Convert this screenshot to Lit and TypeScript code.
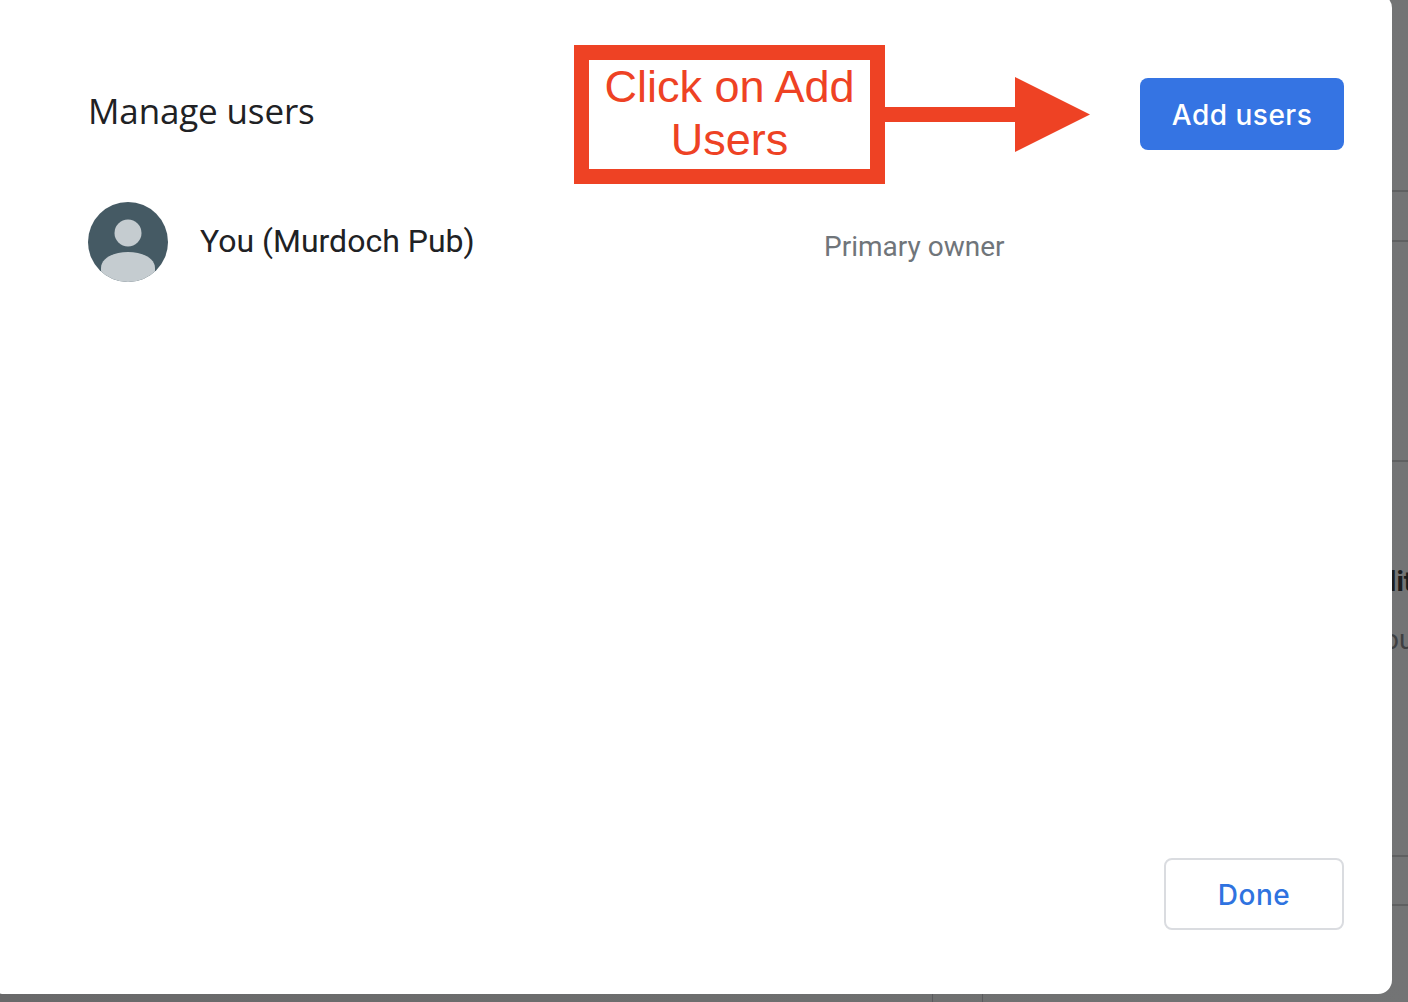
import { LitElement, html, css } from "lit";
import { customElement } from "lit/decorators.js";

@customElement("app-root")
export class AppRoot extends LitElement {
  static styles = css`
    :host {
      display: block;
      width: 1408px;
      height: 1002px;
      position: relative;
      overflow: hidden;
      background: linear-gradient(90deg, #69696a 0%, #6d6e6e 50%, #737475 100%);
      font-family: Roboto, "Liberation Sans", sans-serif;
    }
    .backdrop { position: absolute; inset: 0; }
    .hline { position: absolute; left: 1392px; right: 0; height: 2px; background: #5f6061; }
    .vline { position: absolute; top: 994px; bottom: 0; width: 1px; background: #5a5b5e; }
    .bgtext { position: absolute; line-height: 1; white-space: nowrap; }
    .bgtitle { top: 568px; left: 1389px; font-size: 28px; font-weight: 700; color: #1c1c1d; }
    .bgsub { top: 626px; left: 1383px; font-size: 28px; color: #3f4042; }
    .modal {
      position: relative;
      box-sizing: border-box;
      width: 1402px;
      height: 1000px;
      margin: -6px 0 0 -10px;
      background: #fff;
      border-radius: 14px;
      padding: 84px 48px 64px 98px;
      display: flex;
      flex-direction: column;
    }
    .head { display: flex; justify-content: space-between; align-items: flex-start; height: 72px; }
    h1 {
      margin: 0;
      font-family: "Open Sans", sans-serif;
      font-size: 35px;
      font-weight: 400;
      line-height: 65px;
      color: #202124;
      letter-spacing: -0.15px;
    }
    .btn {
      box-sizing: border-box;
      border-radius: 8px;
      height: 72px;
      padding-top: 2px;
      font-family: Inter, sans-serif;
      font-size: 28px;
      font-weight: 500;
      letter-spacing: 0.5px;
      display: flex;
      align-items: center;
      justify-content: center;
    }
    .primary { width: 204px; background: #3574e3; color: #fff; }
    .outline { width: 180px; background: #fff; color: #2f73e0; border: 2px solid #dadce0; }
    .user { display: flex; margin-top: 52px; height: 80px; }
    .avatar { width: 80px; height: 80px; flex: none; }
    .name { margin-left: 32px; font-size: 32px; line-height: 78px; color: #202124; width: 624px; }
    .role { font-size: 28px; line-height: 90px; color: #70757a; }
    .foot { margin-top: auto; display: flex; justify-content: flex-end; }
    .note { position: absolute; left: 574px; top: 45px; }
    .note-box {
      box-sizing: border-box;
      width: 311px;
      height: 139px;
      border: 15px solid #ee4224;
      background: #fff;
      color: #ee4224;
      font-family: "Liberation Sans", Arial, sans-serif;
      font-size: 45px;
      line-height: 53px;
      text-align: center;
      overflow: hidden;
    }
    .note-arrow { position: absolute; left: 310px; top: 31px; width: 207px; height: 76px; }
  `;

  render() {
    return html`
      <div class="backdrop">
        ${[190, 240, 460, 855, 904].map((y) => html`<div class="hline" style="top:${y}px"></div>`)}
        ${[932, 982].map((x) => html`<div class="vline" style="left:${x}px"></div>`)}
        <div class="bgtext bgtitle">lit</div>
        <div class="bgtext bgsub">ou</div>
      </div>
      <section class="modal">
        <div class="head">
          <h1>Manage users</h1>
          <div class="btn primary">Add users</div>
        </div>
        <div class="user">
          <svg class="avatar" viewBox="0 0 80 80">
            <defs><clipPath id="c"><circle cx="40" cy="40" r="40"></circle></clipPath></defs>
            <circle cx="40" cy="40" r="40" fill="#455a64"></circle>
            <g clip-path="url(#c)" fill="#c5ccd0">
              <circle cx="40" cy="31" r="13.5"></circle>
              <path d="M13 80V66C13 56 26 50 40 50S67 56 67 66V80Z"></path>
            </g>
          </svg>
          <div class="name">You (Murdoch Pub)</div>
          <div class="role">Primary owner</div>
        </div>
        <div class="foot"><div class="btn outline">Done</div></div>
      </section>
      <div class="note">
        <div class="note-box">Click on Add<br />Users</div>
        <svg class="note-arrow" viewBox="0 0 207 76">
          <path d="M0 31H131V1L206 38.5L131 76V46H0Z" fill="#ee4224"></path>
        </svg>
      </div>
    `;
  }
}
